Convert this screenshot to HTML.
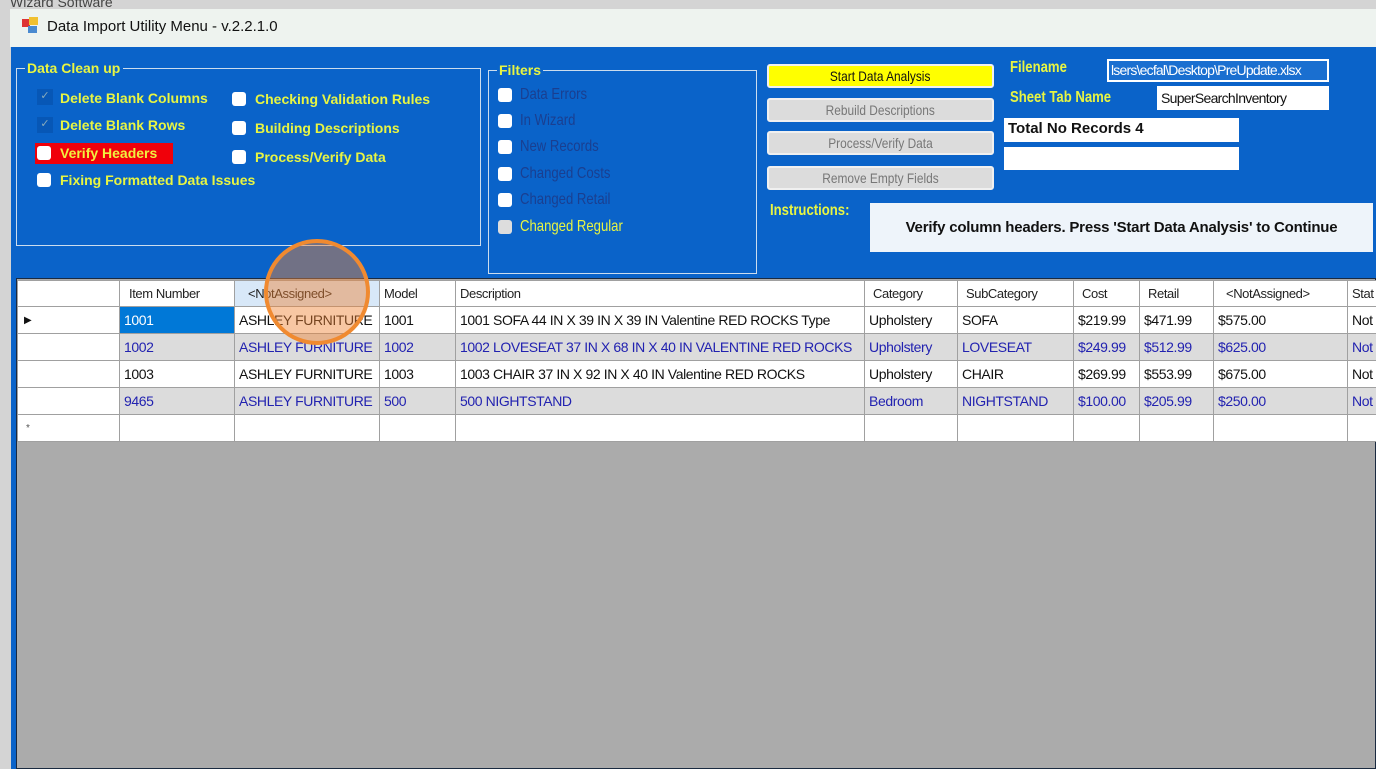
<!DOCTYPE html>
<html><head><meta charset="utf-8"><style>
*{margin:0;padding:0;box-sizing:border-box}
body{width:1376px;height:769px;overflow:hidden;background:#d4d4d4;position:relative;font-family:"Liberation Sans",sans-serif}
.a{position:absolute}
.y{color:#e8f542;font-weight:bold;font-size:14px}
.n{transform:scaleX(0.82);transform-origin:left center;white-space:nowrap}
.cb{position:absolute;width:14px;height:14px;background:#fff;border-radius:3px}
.btn{position:absolute;left:767px;width:227px;height:24px;background:#dcdcdc;border:2px solid #f0f0f0;border-radius:3px;color:#777;font-size:14px;text-align:center;line-height:20px}
.btn span{display:inline-block;transform:scaleX(0.85)}
table{border-collapse:collapse;position:absolute;left:17px;top:280px;font-size:14px;table-layout:fixed;width:1372px;letter-spacing:-0.4px}
td{border:1px solid #a0a0a0;height:27px;padding:0 4px;white-space:nowrap;overflow:hidden}
tr.h td{height:26px;background:#fff;color:#222;font-size:13px}
tr.w td{background:#fff;color:#111}
tr.g td{background:#dcdcdc;color:#2222b0}
td.rh{background:#fff!important}
</style></head><body>
<div class="a" style="left:10px;top:-6px;font-size:14px;color:#444">Wizard Software</div>
<div class="a" style="left:10px;top:9px;width:1366px;height:38px;background:#eef3ef"></div>
<div class="a" style="left:22px;top:19px;width:8px;height:8px;background:#d33"></div>
<div class="a" style="left:29px;top:17px;width:9px;height:8px;background:#f0c030"></div>
<div class="a" style="left:28px;top:26px;width:9px;height:7px;background:#4a8ad0"></div>
<div class="a" style="left:47px;top:18px;font-size:15px;color:#111">Data Import Utility Menu - v.2.2.1.0</div>
<div class="a" style="left:11px;top:47px;width:1365px;height:722px;background:#0a63c9"></div>
<div class="a" style="left:16px;top:68px;width:465px;height:178px;border:1px solid #cde"></div>
<div class="a y" style="left:25px;top:60px;background:#0a63c9;padding:0 3px 0 2px">Data Clean up</div>
<div class="a" style="left:37px;top:89px;width:16px;height:16px;background:#0757b6;color:#8ab;font-size:11px;text-align:center">✓</div>
<div class="a y" style="left:60px;top:90px">Delete Blank Columns</div>
<div class="a" style="left:37px;top:117px;width:16px;height:16px;background:#0757b6;color:#8ab;font-size:11px;text-align:center">✓</div>
<div class="a y" style="left:60px;top:117px">Delete Blank Rows</div>
<div class="a" style="left:35px;top:143px;width:138px;height:21px;background:#f0000a"></div>
<div class="cb" style="left:37px;top:146px"></div>
<div class="a y" style="left:60px;top:145px;color:#f0f040">Verify Headers</div>
<div class="cb" style="left:37px;top:173px"></div>
<div class="a y" style="left:60px;top:172px">Fixing Formatted Data Issues</div>
<div class="cb" style="left:232px;top:92px"></div>
<div class="a y" style="left:255px;top:91px">Checking Validation Rules</div>
<div class="cb" style="left:232px;top:121px"></div>
<div class="a y" style="left:255px;top:120px">Building Descriptions</div>
<div class="cb" style="left:232px;top:150px"></div>
<div class="a y" style="left:255px;top:149px">Process/Verify Data</div>
<div class="a" style="left:488px;top:70px;width:269px;height:204px;border:1px solid #cde"></div>
<div class="a y" style="left:497px;top:62px;background:#0a63c9;padding:0 2px;font-size:14px">Filters</div>
<div class="cb" style="left:498px;top:88px"></div><div class="a n" style="left:520px;top:86px;color:#1a3f90;font-size:16px">Data Errors</div>
<div class="cb" style="left:498px;top:114px"></div><div class="a n" style="left:520px;top:112px;color:#1a3f90;font-size:16px">In Wizard</div>
<div class="cb" style="left:498px;top:140px"></div><div class="a n" style="left:520px;top:138px;color:#1a3f90;font-size:16px">New Records</div>
<div class="cb" style="left:498px;top:167px"></div><div class="a n" style="left:520px;top:165px;color:#1a3f90;font-size:16px">Changed Costs</div>
<div class="cb" style="left:498px;top:193px"></div><div class="a n" style="left:520px;top:191px;color:#1a3f90;font-size:16px">Changed Retail</div>
<div class="cb" style="left:498px;top:220px;background:#ddd"></div><div class="a n" style="left:520px;top:218px;color:#e8f542;font-size:16px">Changed Regular</div>
<div class="btn" style="top:64px;background:#ffff00;color:#111"><span>Start Data Analysis</span></div>
<div class="btn" style="top:98px"><span>Rebuild Descriptions</span></div>
<div class="btn" style="top:131px"><span>Process/Verify Data</span></div>
<div class="btn" style="top:166px"><span>Remove Empty Fields</span></div>
<div class="a y n" style="left:770px;top:202px;font-size:16px">Instructions:</div>
<div class="a" style="left:870px;top:203px;width:503px;height:49px;background:#eef4fa;font-size:15px;font-weight:bold;color:#111;text-align:center;line-height:49px;letter-spacing:-0.2px">Verify column headers. Press 'Start Data Analysis' to Continue</div>
<div class="a y n" style="left:1010px;top:59px;font-size:16px">Filename</div>
<div class="a" style="left:1107px;top:59px;width:222px;height:23px;background:#1a6fd0;border:2px solid #fff;color:#fff;font-size:14px;padding-left:2px;line-height:19px;white-space:nowrap;overflow:hidden;letter-spacing:-0.8px">lsers\ecfal\Desktop\PreUpdate.xlsx</div>
<div class="a y n" style="left:1010px;top:89px;font-size:16px">Sheet Tab Name</div>
<div class="a" style="left:1157px;top:86px;width:172px;height:24px;background:#fff;color:#111;font-size:14px;padding-left:4px;line-height:24px;letter-spacing:-0.7px">SuperSearchInventory</div>
<div class="a" style="left:1004px;top:118px;width:235px;height:24px;background:#fff;color:#111;font-size:15px;font-weight:bold;padding-left:4px;line-height:22px">Total No Records 4</div>
<div class="a" style="left:1004px;top:147px;width:235px;height:23px;background:#fff"></div>
<div class="a" style="left:16px;top:278px;width:1360px;height:491px;background:#ababab;border:1px solid #1a2a40"></div>
<table>
<colgroup><col style="width:102px"><col style="width:115px"><col style="width:145px"><col style="width:76px"><col style="width:409px"><col style="width:93px"><col style="width:116px"><col style="width:66px"><col style="width:74px"><col style="width:134px"><col style="width:42px"></colgroup>
<tr class="h"><td></td><td style="padding-left:9px">Item Number</td><td style="background:#d8e8f8;padding-left:13px">&lt;NotAssigned&gt;</td><td>Model</td><td>Description</td><td style="padding-left:8px">Category</td><td style="padding-left:8px">SubCategory</td><td style="padding-left:8px">Cost</td><td style="padding-left:8px">Retail</td><td style="padding-left:12px">&lt;NotAssigned&gt;</td><td>Stat</td></tr>
<tr class="w"><td class="rh" style="font-size:10px;padding-left:6px">▶</td><td style="background:#0078d7;color:#fff">1001</td><td>ASHLEY FURNITURE</td><td>1001</td><td>1001 SOFA 44 IN X 39 IN X 39 IN Valentine RED ROCKS Type</td><td>Upholstery</td><td>SOFA</td><td>$219.99</td><td>$471.99</td><td>$575.00</td><td>Not</td></tr>
<tr class="g"><td class="rh"></td><td>1002</td><td>ASHLEY FURNITURE</td><td>1002</td><td>1002 LOVESEAT 37 IN X 68 IN X 40 IN VALENTINE RED ROCKS</td><td>Upholstery</td><td>LOVESEAT</td><td>$249.99</td><td>$512.99</td><td>$625.00</td><td>Not</td></tr>
<tr class="w"><td class="rh"></td><td>1003</td><td>ASHLEY FURNITURE</td><td>1003</td><td>1003 CHAIR 37 IN X 92 IN X 40 IN Valentine RED ROCKS</td><td>Upholstery</td><td>CHAIR</td><td>$269.99</td><td>$553.99</td><td>$675.00</td><td>Not</td></tr>
<tr class="g"><td class="rh"></td><td>9465</td><td>ASHLEY FURNITURE</td><td>500</td><td>500 NIGHTSTAND</td><td>Bedroom</td><td>NIGHTSTAND</td><td>$100.00</td><td>$205.99</td><td>$250.00</td><td>Not</td></tr>
<tr class="w"><td class="rh" style="font-size:10px;padding-left:8px;color:#555">*</td><td></td><td></td><td></td><td></td><td></td><td></td><td></td><td></td><td></td><td></td></tr>
</table>
<div class="a" style="left:264px;top:239px;width:106px;height:106px;border-radius:50%;border:4px solid #f08a30;background:rgba(240,130,50,0.45)"></div>
</body></html>
